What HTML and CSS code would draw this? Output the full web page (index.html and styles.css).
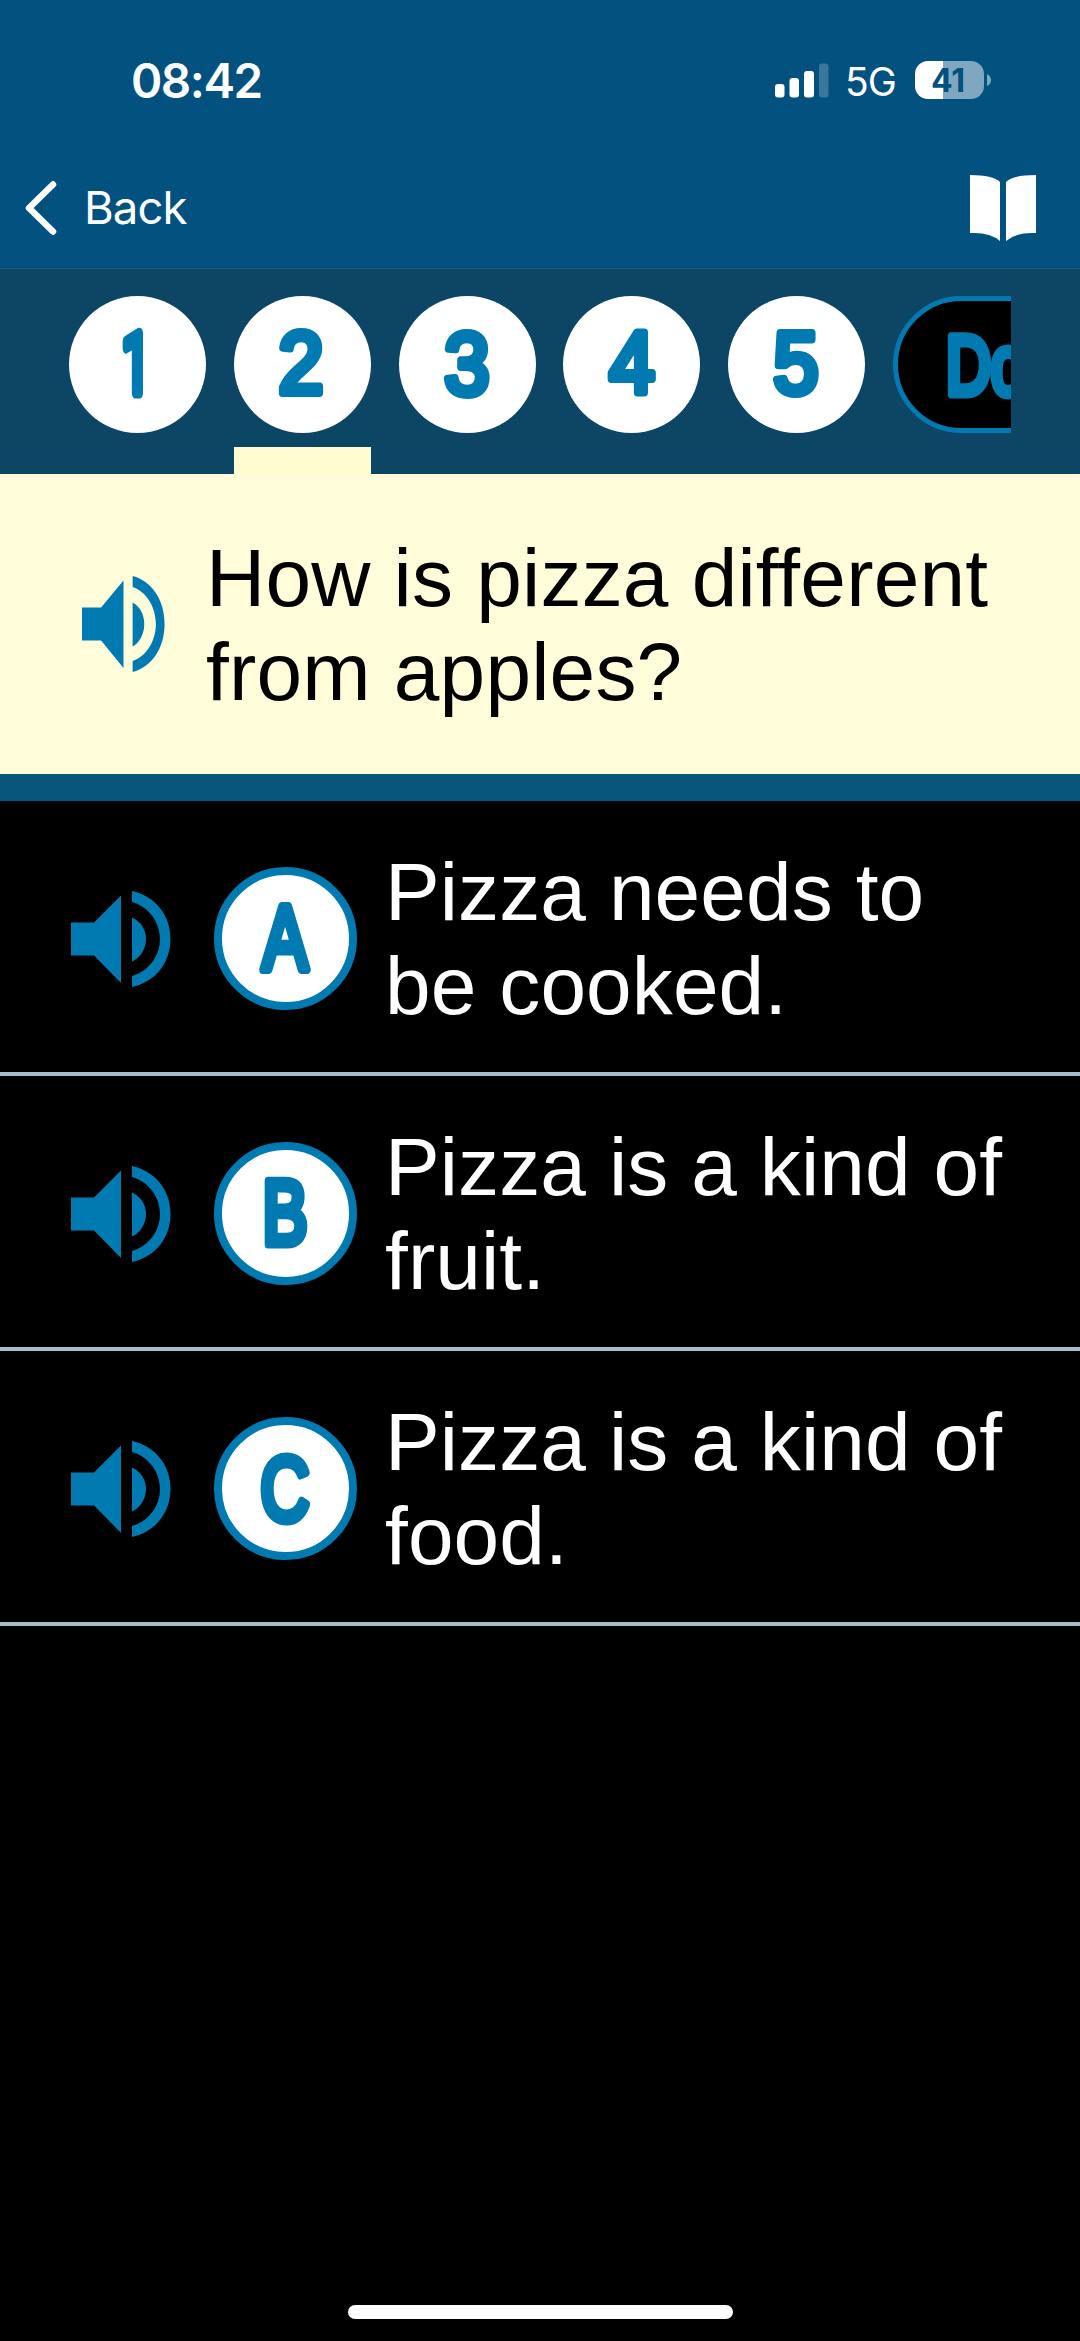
FILE: index.html
```html
<!DOCTYPE html>
<html lang="en">
	<head>
		<meta charset="UTF-8" />
		<title>Quiz</title>
		<link rel="stylesheet" href="styles.css">
	</head>
	<body>
		<svg class="defs">
			<symbol id="speaker" viewBox="0 0 100 96" preserveAspectRatio="none">
				<path d="M0 31.500H23L50 4.500V92L23 64.500H0Z" />
				<path d="M61 26.500C69 30 75 38 75 48S69 67 61 70.500Z" />
				<path d="M61 0C84 5 99.500 24 99.500 48S84 91 61 96V85C78 80 89 65 89 48S78 16 61 11Z" />
			</symbol>
		</svg>

		<header class="header">
			<div class="status">
				<span class="time">08:42</span>
				<div class="status-right">
					<svg class="signal" width="54" height="35" viewBox="0 0 54 35">
						<rect x="0" y="21" width="9.500" height="13.500" rx="3" />
						<rect x="14.500" y="15" width="9.500" height="19.500" rx="3" />
						<rect x="29" y="8" width="10" height="26.500" rx="3" />
						<rect x="44" y="0.500" width="9.500" height="34" rx="3" opacity="0.22" />
					</svg>
					<span class="network">5G</span>
					<div class="battery">41</div>
					<svg class="battery-tip" width="4" height="12" viewBox="0 0 4 12">
						<path d="M0 0Q4 2 4 6T0 12Z" />
					</svg>
				</div>
			</div>
			<nav class="nav">
				<a class="back">
					<svg width="32" height="54" viewBox="0 0 32 54">
						<path d="M28 3.500L4 27L28 50.500" />
					</svg>
					<span>Back</span>
				</a>
				<svg class="book" width="66" height="66" viewBox="0 0 66 66">
					<path d="M0 0Q23 0 30 7V66Q20 57 0 58Z" />
					<path d="M66 0Q43 0 36 7V66Q46 57 66 58Z" />
				</svg>
			</nav>
		</header>

		<div class="tabs">
			<div class="tab"><svg class="circle"><text class="one" x="67" y="97">1</text></svg></div>
			<div class="tab active"><svg class="circle"><text x="67" y="97">2</text></svg></div>
			<div class="tab"><svg class="circle"><text x="68" y="98">3</text></svg></div>
			<div class="tab"><svg class="circle"><text x="69" y="97">4</text></svg></div>
			<div class="tab"><svg class="circle"><text x="68" y="97">5</text></svg></div>
			<div class="tab"><svg class="done"><text x="65" y="93">Done</text></svg></div>
		</div>

		<section class="question">
			<svg class="speaker"><use href="#speaker" /></svg>
			<h1>How is pizza different from apples?</h1>
		</section>

		<ul class="answers">
			<li>
				<svg class="speaker"><use href="#speaker" /></svg>
				<svg class="letter"><text x="84" y="94">A</text></svg>
				<p>Pizza needs to be cooked.</p>
			</li>
			<li>
				<svg class="speaker"><use href="#speaker" /></svg>
				<svg class="letter"><text x="84" y="94">B</text></svg>
				<p>Pizza is a kind of fruit.</p>
			</li>
			<li>
				<svg class="speaker"><use href="#speaker" /></svg>
				<svg class="letter"><text x="84" y="95">C</text></svg>
				<p>Pizza is a kind of food.</p>
			</li>
		</ul>

		<div class="home-bar"></div>
	</body>
</html>
```

FILE: styles.css
```css
* {
	box-sizing: border-box;
}
body {
	margin: 0;
	height: 2341px;
	display: flex;
	flex-direction: column;
	background: #000;
	font-family: "Liberation Sans", Arial, sans-serif;
	overflow: hidden;
}
svg {
	display: block;
	flex-shrink: 0;
}
.defs {
	display: none;
}

/* Header */
.header {
	height: 269px;
	flex-shrink: 0;
	background: #02517f;
	border-bottom: 1px solid #25587a;
	color: #fff;
	font-family: Inter, sans-serif;
}
.status {
	height: 160px;
	padding: 0 89px 0 131px;
	display: flex;
	align-items: center;
	justify-content: space-between;
}
.time {
	font-size: 47.5px;
	font-weight: 600;
	letter-spacing: -1.5px;
}
.status-right {
	display: flex;
	align-items: center;
	fill: #fff;
}
.network {
	width: 52px;
	margin: 3px 18px 0 16px;
	font-size: 39px;
	letter-spacing: -1px;
}
.battery {
	width: 69px;
	height: 38px;
	margin-right: 3px;
	border-radius: 13px;
	background: linear-gradient(to right, #fff 28px, #80a7c0 28px);
	color: #02517f;
	font-size: 32px;
	font-weight: 700;
	line-height: 39px;
	text-align: center;
	text-indent: -3px;
}
.battery-tip {
	fill: #80a7c0;
}
.nav {
	height: 95px;
	padding: 0 44px 0 25px;
	display: flex;
	align-items: center;
	justify-content: space-between;
}
.back {
	display: flex;
	align-items: center;
	gap: 27px;
	font-size: 45.5px;
	letter-spacing: -0.9px;
}
.back path {
	fill: none;
	stroke: #fff;
	stroke-width: 6.5px;
	stroke-linecap: round;
	stroke-linejoin: round;
}
.book {
	fill: #fff;
}

/* Question tabs */
.tabs {
	height: 205px;
	flex-shrink: 0;
	display: flex;
	gap: 27.8px;
	background: #0d4564;
	border: solid #0d4564;
	border-width: 0 69px;
	padding-top: 27px;
	overflow: hidden;
}
.tab {
	display: flex;
	flex-direction: column;
	justify-content: space-between;
	flex-shrink: 0;
}
.circle {
	width: 137px;
	height: 137px;
	border-radius: 50%;
	background: #fff;
}
.active::after {
	content: "";
	height: 27px;
	background: #fffdd0;
}
.done {
	width: 270px;
	height: 137px;
	border: 5px solid #007ab0;
	border-radius: 69px;
	background: #000;
}

/* Numbers and letters drawn with a thick rounded outline */
text {
	fill: #007ab0;
	stroke: #007ab0;
	stroke-width: 8px;
	stroke-linejoin: round;
	font-size: 87px;
	text-anchor: middle;
	transform-box: fill-box;
	transform-origin: center;
	transform: scaleX(0.93);
}
text.one {
	font-family: Roboto, sans-serif;
	stroke-width: 11px;
	font-size: 84px;
	transform: scaleX(0.6);
}
.letter text {
	transform-box: view-box;
	transform-origin: left;
	transform: scaleX(0.75);
	stroke-width: 9px;
	font-size: 90px;
}
.done text {
	transform-box: view-box;
	transform-origin: left;
	transform: scaleX(0.74);
	stroke-width: 9px;
	font-size: 84px;
	text-anchor: start;
}

/* Question */
.question {
	height: 327px;
	flex-shrink: 0;
	display: flex;
	align-items: center;
	padding: 0 80px 0 82px;
	background: #fffcda;
	border-bottom: 27px solid #08577a;
}
.speaker {
	width: 100px;
	height: 96px;
	fill: #007ab0;
}
.question .speaker {
	width: 83px;
}
h1,
p {
	margin: 0;
	font-size: 82px;
	font-weight: normal;
	line-height: 94.4px;
	letter-spacing: 0.2px;
}
.question h1 {
	margin-left: 41px;
	padding-top: 2px;
	color: #000;
}

/* Answers */
.answers {
	margin: 0;
	padding: 0;
	list-style: none;
}
.answers li {
	height: 275px;
	display: flex;
	align-items: center;
	padding: 4px 60px 0 71px;
	border-bottom: 4px solid #a6bccb;
	color: #fff;
}
.letter {
	width: 143px;
	height: 143px;
	margin: 0 28px 0 43px;
	border: 8px solid #007ab0;
	border-radius: 50%;
	background: #fff;
}
.answers p {
	width: 640px;
	padding-top: 1px;
	letter-spacing: 0.1px;
}

.home-bar {
	width: 385px;
	height: 14px;
	margin: auto auto 22px;
	border-radius: 7px;
	background: #fff;
}
```
